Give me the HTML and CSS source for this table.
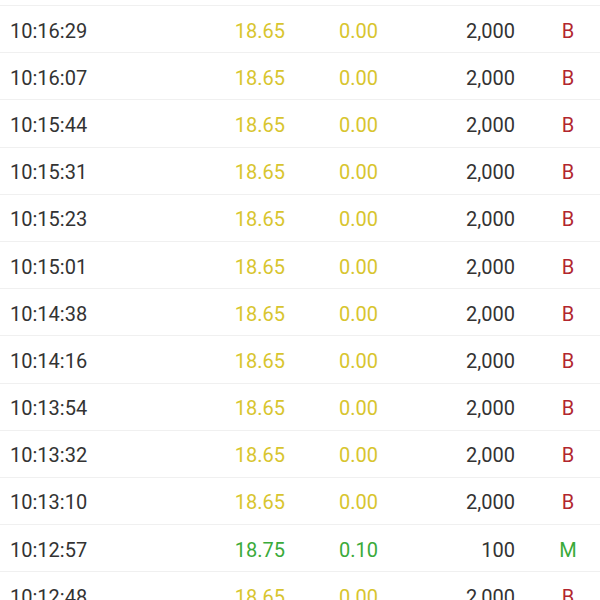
FILE: index.html
```html
<!DOCTYPE html>
<html>
<head>
<meta charset="utf-8">
<link rel="stylesheet" href="styles.css">
</head>
<body>
<div class="list">
  <div class="row"><span class="time">10:16:29</span><span class="price flat">18.65</span><span class="chg flat">0.00</span><span class="vol">2,000</span><span class="type buy">B</span></div>
  <div class="row"><span class="time">10:16:07</span><span class="price flat">18.65</span><span class="chg flat">0.00</span><span class="vol">2,000</span><span class="type buy">B</span></div>
  <div class="row"><span class="time">10:15:44</span><span class="price flat">18.65</span><span class="chg flat">0.00</span><span class="vol">2,000</span><span class="type buy">B</span></div>
  <div class="row"><span class="time">10:15:31</span><span class="price flat">18.65</span><span class="chg flat">0.00</span><span class="vol">2,000</span><span class="type buy">B</span></div>
  <div class="row"><span class="time">10:15:23</span><span class="price flat">18.65</span><span class="chg flat">0.00</span><span class="vol">2,000</span><span class="type buy">B</span></div>
  <div class="row"><span class="time">10:15:01</span><span class="price flat">18.65</span><span class="chg flat">0.00</span><span class="vol">2,000</span><span class="type buy">B</span></div>
  <div class="row"><span class="time">10:14:38</span><span class="price flat">18.65</span><span class="chg flat">0.00</span><span class="vol">2,000</span><span class="type buy">B</span></div>
  <div class="row"><span class="time">10:14:16</span><span class="price flat">18.65</span><span class="chg flat">0.00</span><span class="vol">2,000</span><span class="type buy">B</span></div>
  <div class="row"><span class="time">10:13:54</span><span class="price flat">18.65</span><span class="chg flat">0.00</span><span class="vol">2,000</span><span class="type buy">B</span></div>
  <div class="row"><span class="time">10:13:32</span><span class="price flat">18.65</span><span class="chg flat">0.00</span><span class="vol">2,000</span><span class="type buy">B</span></div>
  <div class="row"><span class="time">10:13:10</span><span class="price flat">18.65</span><span class="chg flat">0.00</span><span class="vol">2,000</span><span class="type buy">B</span></div>
  <div class="row"><span class="time">10:12:57</span><span class="price up">18.75</span><span class="chg up">0.10</span><span class="vol">100</span><span class="type mid">M</span></div>
  <div class="row"><span class="time">10:12:48</span><span class="price flat">18.65</span><span class="chg flat">0.00</span><span class="vol">2,000</span><span class="type buy">B</span></div>
</div>
</body>
</html>
```
FILE: styles.css
```css
html, body {
  margin: 0;
  padding: 0;
  background: #ffffff;
}
body {
  width: 600px;
  height: 600px;
  overflow: hidden;
  font-family: Roboto, "Noto Sans", sans-serif;
  font-size: 20px;
  color: #333333;
}
.list {
  padding-top: 5px;
}
.row {
  box-sizing: border-box;
  height: 47.2px;
  border-top: 1px solid #f0f0f0;
  display: grid;
  grid-template-columns: 200px 75px 93px 137px 1fr;
  align-items: center;
  padding-left: 10px;
  padding-top: 3px;
  line-height: 1;
}
.price, .chg, .vol {
  text-align: right;
}
.type {
  text-align: center;
  padding-left: 21px;
}
.flat { color: #d8c52e; }
.up { color: #3aaa3a; }
.buy { color: #b2262e; }
.mid { color: #3aaa3a; }
```
